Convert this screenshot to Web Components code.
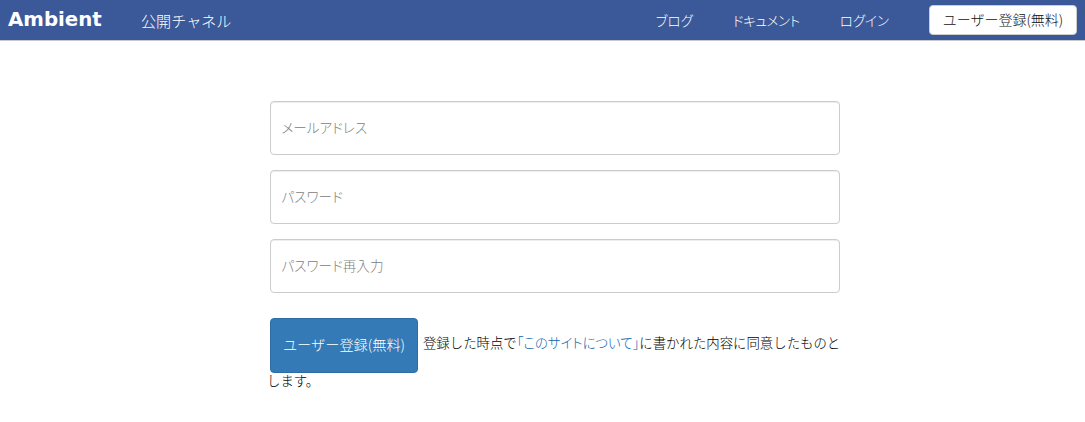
<!DOCTYPE html>
<html lang="ja">
<head>
<meta charset="utf-8">
<title>Ambient</title>
<style>
html,body{margin:0;padding:0;background:#fff}
body{font-family:"Noto Sans CJK JP","Liberation Sans",sans-serif;font-size:14px;color:#333}
</style>
</head>
<body>
<app-navbar>
  <nav-brand slot="brand">Ambient</nav-brand>
  <nav-link slot="left" wide>公開チャネル</nav-link>
  <nav-link slot="right">ブログ</nav-link>
  <nav-link slot="right" style="letter-spacing:-.35px">ドキュメント</nav-link>
  <nav-link slot="right">ログイン</nav-link>
  <nav-cta slot="cta">ユーザー登録(無料)</nav-cta>
</app-navbar>
<signup-form>
  <text-field type="email" placeholder="メールアドレス"></text-field>
  <text-field type="password" placeholder="パスワード"></text-field>
  <text-field type="password" placeholder="パスワード再入力"></text-field>
  <signup-note slot="note">
    <primary-button>ユーザー登録(無料)</primary-button>
    <span>登録した時点で</span><a href="#">「このサイトについて」</a><span>に書かれた内容に同意したものと</span><span>します。</span>
  </signup-note>
</signup-form>
<script>
function def(name, css, html, extra){
  customElements.define(name, class extends HTMLElement{
    constructor(){
      super();
      this.attachShadow({mode:'open'}).innerHTML='<style>'+css+'</style>'+html;
    }
    connectedCallback(){ if(extra) extra(this); }
  });
}
var JP='"Noto Sans CJK JP","Liberation Sans",sans-serif';
def('app-navbar',
 ':host{display:flex;align-items:stretch;height:40px;background:#3b5998;border-bottom:1px solid #c8c8c8;box-sizing:content-box;padding:0 8px}'+
 '.left,.right{display:flex;align-items:center}.right{margin-left:auto}',
 '<div class="left"><slot name="brand"></slot><slot name="left"></slot></div><div class="right"><slot name="right"></slot><slot name="cta"></slot></div>');
def('nav-brand',
 ':host{display:block;font:bold 19.8px/40px "DejaVu Sans","Liberation Sans",sans-serif;color:#fff;width:133px;margin-top:-1px}',
 '<slot></slot>');
def('nav-link',
 ':host{display:block;font-family:'+JP+';font-weight:300;font-size:13.5px;font-feature-settings:"palt";line-height:39px;color:#fff;margin-right:40px}'+
 ':host([wide]){font-size:15.1px;font-feature-settings:normal}',
 '<slot></slot>');
def('nav-cta',
 ':host{display:block;box-sizing:border-box;width:148px;height:30px;text-align:center;font-family:'+JP+';font-weight:300;font-size:14px;line-height:27px;color:#111;background:#fff;border:1px solid #ccc;border-radius:4px}',
 '<slot></slot>');
def('signup-form',
 ':host{display:block;width:572px;margin:60px 0 0 268px}'+
 '.fields{display:flex;flex-direction:column;gap:15px;padding-left:2px;margin-bottom:25px}',
 '<div class="fields"><slot></slot></div><slot name="note"></slot>');
def('text-field',
 ':host{display:block}'+
 'input{display:block;box-sizing:border-box;width:100%;height:54px;padding:0 12px 2px 10.5px;border:1px solid #ccc;border-radius:4px;font-family:'+JP+';font-weight:300;font-size:13.6px;font-feature-settings:"palt";color:#555;background:#fff;box-shadow:inset 0 1px 1px rgba(0,0,0,.075);outline:none}'+
 'input::placeholder{color:#808080;opacity:1}',
 '<input>',
 function(el){
   var i=el.shadowRoot.querySelector('input');
   i.type=el.getAttribute('type')||'text';
   i.placeholder=el.getAttribute('placeholder')||'';
 });
def('signup-note',
 ':host{display:block;margin:0 -3px 0 -1px;font-family:'+JP+';font-weight:300;font-size:13.4px;line-height:19px;color:#000}'+
 '::slotted(a){color:#0f66ad;text-decoration:none;font-feature-settings:"palt"}',
 '<slot></slot>');
def('primary-button',
 ':host{display:inline-block;box-sizing:border-box;margin:0 2px -2px 3px;width:148px;height:55px;text-align:center;line-height:50px;font-family:'+JP+';font-weight:300;font-size:14.2px;color:#fff;background:#337ab7;border:1px solid #2e6da4;border-radius:4px;vertical-align:middle}',
 '<slot></slot>');
</script>
</body>
</html>
